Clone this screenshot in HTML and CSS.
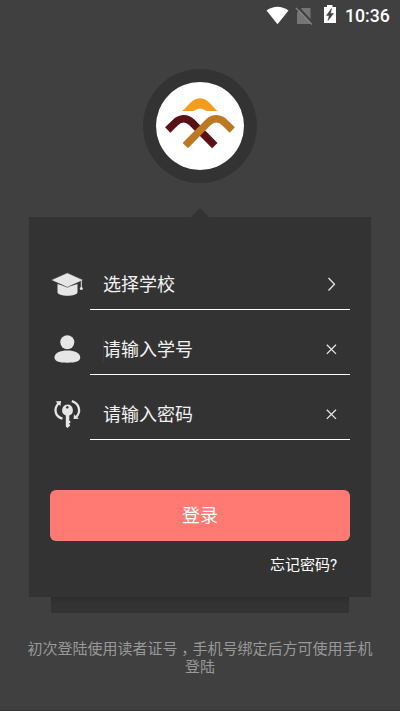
FILE: index.html
```html
<!DOCTYPE html>
<html lang="zh-CN">
<head>
<meta charset="utf-8">
<title>登录</title>
<link rel="stylesheet" href="styles.css">
</head>
<body>
<div class="screen">
  <header class="status">
    <svg class="signals" width="74" height="32" viewBox="0 0 74 32">
      <path d="M0.5 10.5Q11.500 3 22.500 10.500L11.500 24.300Z" fill="#fff"/>
      <path d="M35.500 8H44.500V24H31V12.500Z" fill="#757575"/>
      <path d="M31.500 6.500L48 24.500" stroke="#404040" stroke-width="2.200"/>
      <path d="M30 8L46 24.500" stroke="#858585" stroke-width="1.200"/>
      <path d="M58 7H61V5H66.500V7H70V23H58Z" fill="#fff"/>
      <path d="M65.500 8.500L60.500 15.500H63.200L62 20.500L67.500 13.500H64.500Z" fill="#404040" stroke="#404040" stroke-width=".5"/>
    </svg>
    <span class="clock">10:36</span>
  </header>
  <div class="avatar">
    <svg width="88" height="88" viewBox="0 0 88 88">
      <circle cx="44" cy="44" r="44" fill="#fff"/>
      <path d="M26 29C31 26 35.500 16.300 44 16.300S57 26 61.500 29H50.500Q44 24 37.500 29Z" fill="#f49c1e"/>
      <path d="M11.700 48L19 41C24 35.500 31 35.500 36 40.500L58.800 63.700" fill="none" stroke="#5a1115" stroke-width="7.500"/>
      <path d="M29.300 63.700L52 40.500C57 35.500 64 35.500 69 41L76.300 48" fill="none" stroke="#bd7825" stroke-width="7.500"/>
    </svg>
  </div>
  <svg class="pointer" width="18" height="9" viewBox="0 0 18 9"><path d="M0 9L9 0L18 9Z" fill="#333"/></svg>
  <main class="card">
    <div class="row">
      <svg class="icon" width="40" height="40" viewBox="0 0 40 40" fill="#e6e6e6">
        <path d="M7.500 19Q17.500 23 27.500 19V27C27.500 32 7.500 32 7.500 27V19Z"/>
        <path d="M1 15.100L17.300 7.800L33.500 15.100L17.300 22.300Z" stroke="#333" stroke-width=".6"/>
        <path d="M31.300 15.500V23.500" stroke="#e6e6e6" stroke-width="1"/><circle cx="31.300" cy="23.500" r="1.500"/>
      </svg>
      <div class="field"><span>选择学校</span>
        <svg class="act" width="14" height="16" viewBox="0 0 14 16"><path d="M4.500 2L10.500 8.200L4.500 14.500"/></svg></div>
    </div>
    <div class="row">
      <svg class="icon" width="40" height="40" viewBox="0 0 40 40" fill="#e6e6e6">
        <circle cx="17.300" cy="12.300" r="7"/>
        <path d="M4.500 27.300C4.500 23 10 20.500 17.300 20.500S30.200 23 30.200 27.300S26 32.700 17.300 32.700S4.500 31.500 4.500 27.300Z"/>
      </svg>
      <div class="field caret"><span>请输入学号</span>
        <svg class="act" width="14" height="16" viewBox="0 0 14 16"><path d="M2.800 3.700L12 12.900M12 3.700L2.800 12.900"/></svg></div>
    </div>
    <div class="row">
      <svg class="icon" width="40" height="40" viewBox="0 0 40 40">
        <path fill="#e6e6e6" fill-rule="evenodd" d="M17.300 9.500a5.700 5.700 0 0 1 2 11V31.500L17.300 33L15.800 31.500V20.500A5.700 5.700 0 0 1 17.300 9.500ZM17.300 11a1.300 1.300 0 1 0 .01 0Z"/>
        <path fill="#e6e6e6" d="M18.500 26H20.300V28H18.500ZM18.500 29.500H20V31H18.500Z"/>
        <path fill="none" stroke="#e6e6e6" stroke-width="2.300" d="M12.500 23.700C4.500 21.500 3.500 13.500 9 7.800M21.800 6.200C29.500 8.500 31.500 17 25.800 22.300"/>
        <path fill="#e6e6e6" d="M5.500 6.500L11 6L10.500 11ZM24 19.500L29 23.800L23.500 24Z"/>
      </svg>
      <div class="field"><span>请输入密码</span>
        <svg class="act" width="14" height="16" viewBox="0 0 14 16"><path d="M2.800 3.700L12 12.900M12 3.700L2.800 12.900"/></svg></div>
    </div>
    <button class="login">登录</button>
    <a class="forgot">忘记密码?</a>
  </main>
  <div class="shelf"></div>
  <p class="note">初次登陆使用读者证号<span class="comma">，</span>手机号绑定后方可使用手机登陆</p>
</div>
</body>
</html>
```

FILE: styles.css
```css
* { box-sizing: border-box; }
body {
  margin: 0;
  background: #404040;
  color: #f2f2f2;
  font-family: Roboto, "Noto Sans CJK SC", sans-serif;
}
.screen {
  height: 711px;
  display: flex;
  flex-direction: column;
  align-items: center;
  border-bottom: 1px solid #333;
  overflow: hidden;
}
.status {
  width: 100%;
  height: 32px;
  flex: none;
  padding-right: 10px;
  display: flex;
  justify-content: flex-end;
  align-items: center;
}
.clock {
  width: 45px;
  margin-left: 5px;
  font-size: 17.7px;
  font-weight: 500;
  line-height: 34px;
  color: #fff;
  white-space: nowrap;
}
.avatar {
  width: 114px;
  height: 114px;
  margin-top: 37px;
  flex: none;
  border-radius: 50%;
  background: #333;
  display: grid;
  place-items: center;
}
.pointer {
  flex: none;
  margin-top: 25px;
}
.card {
  width: 342px;
  height: 380px;
  flex: none;
  padding: 28px 21px 0;
  background: #333;
  display: flex;
  flex-direction: column;
}
.row {
  height: 65px;
  display: flex;
}
.icon {
  width: 40px;
  flex: none;
  margin-top: 20px;
}
.field {
  flex: 1;
  padding: 16px 12.5px 0 13px;
  border-bottom: 1px solid #fff;
  display: flex;
  justify-content: space-between;
  align-items: center;
  font-size: 18px;
  line-height: 26px;
}
.caret {
  background: linear-gradient(#3d3d3d, #3d3d3d) 13px 27px / 1px 25px no-repeat;
}
.act {
  margin-bottom: 3px;
  fill: none;
  stroke: #e6e6e6;
  stroke-width: 1.3;
}
.login {
  height: 51px;
  flex: none;
  margin-top: 50px;
  padding: 0 0 3px;
  border: 0;
  border-radius: 6px;
  background: #ff7a73;
  color: #fff;
  font: inherit;
  font-size: 18px;
}
.forgot {
  align-self: flex-end;
  margin: 13px 13px 0 0;
  font-size: 15px;
  line-height: 22px;
  color: #fff;
}
.shelf {
  width: 298px;
  height: 16px;
  flex: none;
  background: linear-gradient(#2d2d2d, #333 7px);
}
.note {
  width: 350px;
  margin: 27px 0 0;
  font-size: 15px;
  line-height: 18px;
  text-align: center;
  color: #999;
}
.comma {
  display: inline-block;
  width: 15px;
  text-align: center;
  font-feature-settings: "halt";
}
```
